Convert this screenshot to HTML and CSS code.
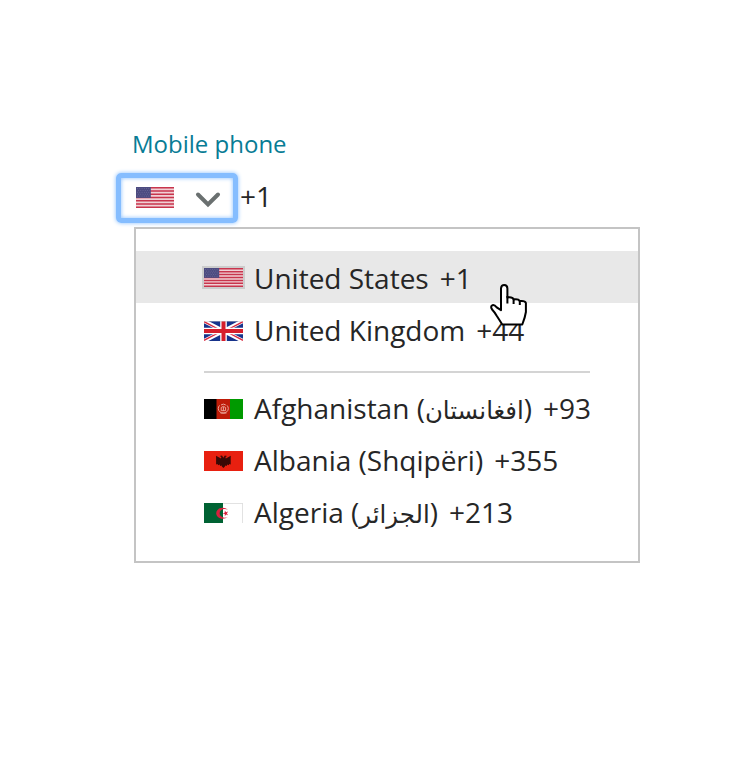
FILE: index.html
```html
<!DOCTYPE html>
<html lang="en">
<head>
<meta charset="utf-8">
<title>Mobile phone</title>
<link rel="stylesheet" href="styles.css">
</head>
<body>
<svg class="defs" width="0" height="0" aria-hidden="true">
  <symbol id="us" viewBox="0 0 39 20" preserveAspectRatio="none">
    <rect width="39" height="20" fill="#f0d0d5"/>
    <path d="M0 .77h39M0 3.85h39M0 6.92h39M0 10h39M0 13.08h39M0 16.15h39M0 19.23h39" stroke="#c8354d" stroke-width="1.54"/>
    <rect width="15.2" height="10.4" fill="#4c4b80"/>
    <path d="M1.2 1.5h13M2.2 3.3h12M1.2 5.1h13M2.2 6.9h12M1.2 8.7h13" stroke="#7472a0" stroke-width=".8" stroke-dasharray=".8 1.5"/>
  </symbol>
  <symbol id="uk" viewBox="0 0 39 20" preserveAspectRatio="none">
    <rect width="39" height="20" fill="#17338b"/>
    <path d="M0 0 39 20M39 0 0 20" stroke="#fff" stroke-width="4"/>
    <path d="M0 .7 18 10M21 10 39 19.3M39 .7 21 10M18 10 0 19.3" stroke="#d9263d" stroke-width="1.3"/>
    <path d="M19.5 0v20M0 10h39" stroke="#fff" stroke-width="6.6"/>
    <path d="M19.5 0v20M0 10h39" stroke="#d61f2c" stroke-width="4"/>
    <path d="M0 .3h39" stroke="#ccc" stroke-width=".6"/>
  </symbol>
  <symbol id="af" viewBox="0 0 39 20" preserveAspectRatio="none">
    <rect width="13" height="20"/>
    <rect x="12.5" width="13.5" height="20" fill="#be1c08"/>
    <rect x="26" width="13" height="20" fill="#009a00"/>
    <g fill="none" stroke="#eba598">
      <path d="M15.6 6.4a5 4.6 0 1 0 7.4 0M16.5 14h6" stroke-width="1"/>
      <path d="M17.2 8.5q2.2-2.3 4.4 0v3.2h-4.4zM19.4 8v4M17 6q2.4-1.8 4.8 0" stroke-width="1"/>
    </g>
  </symbol>
  <symbol id="al" viewBox="0 0 39 20" preserveAspectRatio="none">
    <rect width="39" height="20" fill="#e82010"/>
    <path d="M19.4 6.7 18 4.6l-2.3.5 1.6 1-.3 1.3-5-2.6.1 2.4v6.4l1.4-.6.6 1.2 1.6-.6.4 1.4 1.5-.4.3 1 1.5 1.4 1.5-1.4.3-1 1.5.4.4-1.4 1.6.6.6-1.2 1.4.6V7.2l.1-2.4-5 2.6-.3-1.3 1.6-1-2.3-.5z" fill="#3a0805"/>
  </symbol>
  <symbol id="dz" viewBox="0 0 39 20" preserveAspectRatio="none">
    <rect width="39" height="20" fill="#fff"/>
    <rect width="19" height="20" fill="#006233"/>
    <path d="M23.8 6.5q-2.2-1.7-5-1.7c-4 0-6.6 2.6-6.6 5.5s2.6 5.5 6.6 5.5q2.8 0 5-1.7-1.500.6-3 .6c-3.300 0-5.200-2-5.200-4.400s1.900-4.400 5.200-4.400q1.500 0 3 .6z" fill="#d8203e"/>
    <path d="m18.800 10.400 2-.8v-2.100l1.300 1.700 2-.7-1.200 1.900 1.200 1.800-2-.6-1.300 1.700v-2.200z" fill="#d8203e"/>
    <path d="M19 .3h19.700V20" fill="none" stroke="#ccc" stroke-width=".7"/>
  </symbol>
</svg>

<main class="field">
  <div class="label">Mobile phone</div>
  <div class="control">
    <div class="select">
      <svg class="select-flag"><use href="#us"/></svg>
      <svg class="chevron" viewBox="0 0 26 18"><path d="m3 3.5 10 10 10-10"/></svg>
    </div>
    <span class="prefix">+1</span>
  </div>
  <div class="menu">
    <div class="suggested">
      <div class="option active"><svg class="flag"><use href="#us"/></svg><span class="name">United States</span><span class="code">+1</span></div>
      <div class="option"><svg class="flag"><use href="#uk"/></svg><span class="name">United Kingdom</span><span class="code">+44</span></div>
    </div>
    <div class="divider"></div>
    <div class="all">
      <div class="option"><svg class="flag"><use href="#af"/></svg><span class="name">Afghanistan (<bdi lang="fa">افغانستان</bdi>)</span><span class="code">+93</span></div>
      <div class="option"><svg class="flag"><use href="#al"/></svg><span class="name">Albania (Shqipëri)</span><span class="code">+355</span></div>
      <div class="option"><svg class="flag"><use href="#dz"/></svg><span class="name">Algeria (<bdi lang="ar">الجزائر</bdi>)</span><span class="code">+213</span></div>
    </div>
    <svg class="pointer" viewBox="0 0 40 46"><path d="M16.3 41.500 11 33.300Q8.500 29 6.100 26.500 4 23.200 6.500 22.200q2-.6 4.200 2.100L15 27.200V5.300Q15.400 2 18.200 2q3.200 0 3.200 3.500v9q4.800-1 6.500 2 4.400-.7 6 1.600 5.200-.6 6 1.900V29q-.7 5-3.600 12.500z" transform="translate(-1 0)"/><path d="M20.400 13v7.500M26.600 15.500v5.500M32.800 17.500v4.500"/></svg>
  </div>
</main>
</body>
</html>
```

FILE: styles.css
```css
* { box-sizing: border-box; }
body {
  margin: 0;
  background: #fff;
  color: #262626;
  font: 28px/50px "Open Sans", "Noto Sans", "DejaVu Sans", sans-serif;
}
svg { display: block; flex: none; }
.defs { position: absolute; }
.field { padding: 127px 100px 0 116px; }
.label {
  padding-left: 16px;
  font-size: 24px;
  line-height: 33px;
  color: #087c95;
}
.control { display: flex; align-items: center; height: 50px; margin-top: 13px; }
.select {
  display: flex;
  align-items: center;
  width: 122px;
  height: 50px;
  padding-left: 15px;
  border: 5px solid #85bdff;
  border-radius: 5px;
  box-shadow: 0 0 4px #85bdff, inset 0 0 4px #85bdff;
}
.select-flag { width: 38px; height: 21px; margin-bottom: 1px; }
.chevron { width: 26px; height: 18px; margin: 3px 0 0 21px; }
.chevron path {
  fill: none;
  stroke: #6a7070;
  stroke-width: 4;
  stroke-linecap: round;
}
.prefix { margin: 0 0 4px 2px; }
.menu {
  position: relative;
  width: 506px;
  height: 336px;
  margin: 4px 0 0 18px;
  padding: 22px 0;
  border: 2px solid #c4c4c4;
}
.option {
  display: flex;
  align-items: center;
  height: 52px;
  padding-left: 68px;
  white-space: nowrap;
}
.suggested .option { padding-top: 2px; }
.all .option { padding-bottom: 2px; }
.option.active { background: #e8e8e8; }
.flag { width: 39px; height: 20px; margin: 2px 11px 0 0; }
.active .flag { height: 19px; margin-top: -1px; box-shadow: 0 0 0 2px #ccc; }
.name { margin-right: 11px; }
bdi { font-size: 24.4px; line-height: 1; }
.divider { width: 386px; height: 2px; margin: 16px 0 10px 68px; background: #d4d4d4; }
.pointer {
  position: absolute;
  left: 351px;
  top: 54px;
  width: 40px;
  height: 46px;
}
.pointer path {
  fill: #fff;
  stroke: #000;
  stroke-width: 2;
  stroke-linejoin: round;
}
```
